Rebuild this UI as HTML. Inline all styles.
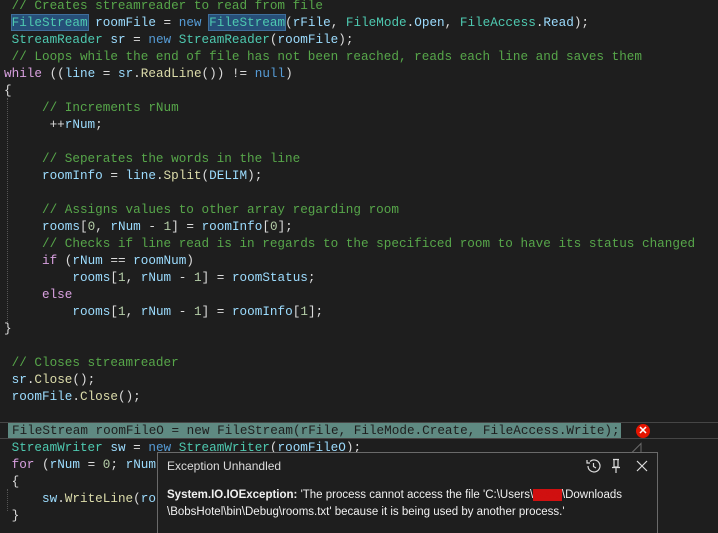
<!DOCTYPE html>
<html><head><meta charset="utf-8"><style>
body{margin:0;width:718px;height:523px;background:#1e1e1e;overflow:hidden;position:relative;font-family:"Liberation Mono",monospace;}
#code{position:absolute;left:4px;top:-3px;font-size:12.67px;line-height:17px;color:#dcdcdc;white-space:pre;margin:0;font-family:"Liberation Mono",monospace;}
.c{color:#57a64a}.k{color:#569cd6}.p{color:#d8a0df}.t{color:#4ec9b0}.v{color:#9cdcfe}.m{color:#dcdcaa}.n{color:#b5cea8}
.hl{background:#264f78;outline:1px solid #3f6e9a}
.cur{position:absolute;left:0;right:0;top:422px;height:15px;border-top:1px solid #464646;border-bottom:1px solid #464646;}
.sel{position:absolute;left:8px;top:423px;width:613px;height:15px;background:#5f8a82;}
.guide{position:absolute;left:7px;top:98px;height:226px;border-left:1px dotted #555;}
.guide2{position:absolute;left:7px;top:489px;height:22px;border-left:1px dotted #555;}
.pop{position:absolute;left:157px;top:452px;width:499px;height:80px;background:#1e1e1e;border:1px solid #6a6a6a;border-bottom:none;font-family:"Liberation Sans",sans-serif;color:#dcdcdc;}
.title{position:absolute;left:9px;top:6px;font-size:12px;}
.msg{position:absolute;left:9px;top:34px;font-size:11.5px;line-height:17px;width:480px;color:#f0f0f0}
.err{position:absolute;left:636px;top:424px;width:14px;height:14px;border-radius:50%;background:#e51400;color:#fff;font:bold 11px/14px "Liberation Sans",sans-serif;text-align:center;}
</style></head><body>
<div class="cur"></div><div class="sel"></div>
<div class="guide"></div><div class="guide2"></div>
<pre id="code"><span class="c"> // Creates streamreader to read from file</span>
 <span class="t hl">FileStream</span> <span class="v">roomFile</span> = <span class="k">new</span> <span class="t hl">FileStream</span>(<span class="v">rFile</span>, <span class="t">FileMode</span>.<span class="v">Open</span>, <span class="t">FileAccess</span>.<span class="v">Read</span>);
 <span class="t">StreamReader</span> <span class="v">sr</span> = <span class="k">new</span> <span class="t">StreamReader</span>(<span class="v">roomFile</span>);
<span class="c"> // Loops while the end of file has not been reached, reads each line and saves them</span>
<span class="p">while</span> ((<span class="v">line</span> = <span class="v">sr</span>.<span class="m">ReadLine</span>()) != <span class="k">null</span>)
{
     <span class="c">// Increments rNum</span>
      ++<span class="v">rNum</span>;

     <span class="c">// Seperates the words in the line</span>
     <span class="v">roomInfo</span> = <span class="v">line</span>.<span class="m">Split</span>(<span class="v">DELIM</span>);

     <span class="c">// Assigns values to other array regarding room</span>
     <span class="v">rooms</span>[<span class="n">0</span>, <span class="v">rNum</span> - <span class="n">1</span>] = <span class="v">roomInfo</span>[<span class="n">0</span>];
     <span class="c">// Checks if line read is in regards to the specificed room to have its status changed</span>
     <span class="p">if</span> (<span class="v">rNum</span> == <span class="v">roomNum</span>)
         <span class="v">rooms</span>[<span class="n">1</span>, <span class="v">rNum</span> - <span class="n">1</span>] = <span class="v">roomStatus</span>;
     <span class="p">else</span>
         <span class="v">rooms</span>[<span class="n">1</span>, <span class="v">rNum</span> - <span class="n">1</span>] = <span class="v">roomInfo</span>[<span class="n">1</span>];
}

<span class="c"> // Closes streamreader</span>
 <span class="v">sr</span>.<span class="m">Close</span>();
 <span class="v">roomFile</span>.<span class="m">Close</span>();


 <span class="t">StreamWriter</span> <span class="v">sw</span> = <span class="k">new</span> <span class="t">StreamWriter</span>(<span class="v">roomFileO</span>);
 <span class="p">for</span> (<span class="v">rNum</span> = <span class="n">0</span>; <span class="v">rNum</span>
 {
     <span class="v">sw</span>.<span class="m">WriteLine</span>(<span class="v">ro</span>
 }</pre>
<div class="err">✕</div>
<svg style="position:absolute;left:625px;top:440px" width="20" height="14"><path d="M7 12.5 L16 3.5 L16 12.5" fill="#1e1e1e" stroke="#6a6a6a" stroke-width="1"/></svg>
<div class="pop">
<div class="title">Exception Unhandled</div>
<svg style="position:absolute;left:427px;top:5px" width="70" height="16" fill="none" stroke="#dcdcdc" stroke-width="1.2">
<path d="M3 8 A6 6 0 1 0 5 3.5 M2 2 L2 5 L5 5 M8.5 5 L8.5 8.5 L11 10"/>
<path d="M28 1.5 L34 1.5 M29 1.5 L29 9 L33 9 L33 1.5 M27 9.5 L35 9.5 M31 9.5 L31 15"/>
<path d="M52 3 L62 13 M62 3 L52 13"/>
</svg>
<div class="msg"><b>System.IO.IOException:</b> 'The process cannot access the file 'C:\Users\<span style="color:#d01010;background:#d01010">xxxxx</span>\Downloads \BobsHotel\bin\Debug\rooms.txt' because it is being used by another process.'</div>
</div>
<pre style="position:absolute;left:12px;top:422px;margin:0;font-family:'Liberation Mono',monospace;font-size:12.67px;line-height:17px;color:#1e1e1e">FileStream roomFileO = new FileStream(rFile, FileMode.Create, FileAccess.Write);</pre>
</body></html>
